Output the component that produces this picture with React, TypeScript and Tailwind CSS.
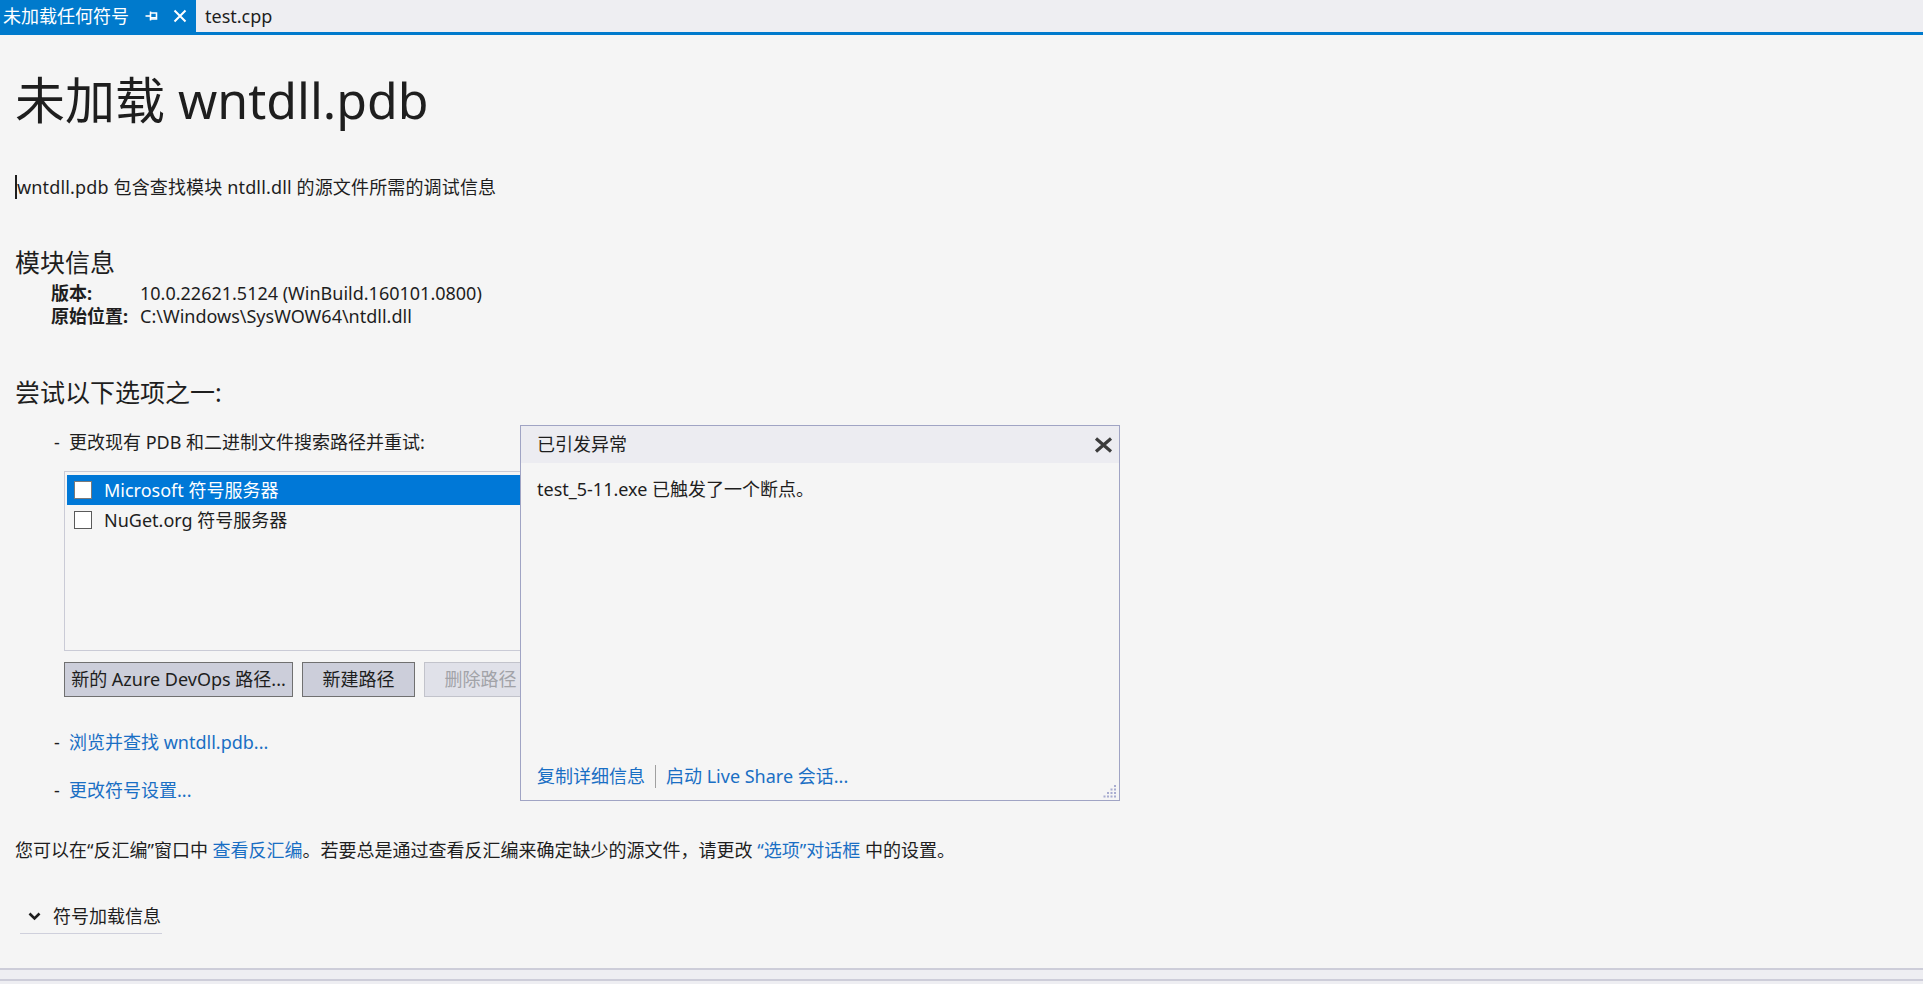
export default function App() {
  return (
    <div className="relative w-[1923px] h-[984px] overflow-hidden bg-[#f5f5f5] text-[#1e1e1e] flex flex-col font-['Noto_Sans','Noto_Sans_CJK_SC',sans-serif]">
      {/* Tab bar */}
      <div className="h-[35px] shrink-0 bg-[#eeeef2] border-b-[3px] border-[#007acc] flex">
        <div className="w-[196px] h-[32px] bg-[#007acc] text-white flex items-center pl-[3px] text-[18px] leading-none">
          <span>未加载任何符号</span>
          <svg className="ml-[16px]" width="13" height="12" viewBox="0 0 13 12" fill="none" stroke="white" strokeWidth="1.6">
            <path d="M0.5 6h5" />
            <path d="M5.5 1.5v9" />
            <path d="M5.5 3h6v6h-6" />
            <path d="M5.5 7.8h6" />
          </svg>
          <svg className="ml-[15px]" width="14" height="14" viewBox="0 0 14 14" fill="none" stroke="white" strokeWidth="2">
            <path d="M1.5 1.5l11 11M12.5 1.5l-11 11" />
          </svg>
        </div>
        <div className="pl-[9px] flex items-center text-[18px] leading-none text-[#1e1e1e]">test.cpp</div>
      </div>

      {/* Main content */}
      <div className="flex-1 px-[15px] flex flex-col">
        <h1 className="mt-[36px] text-[50px] leading-[58px] font-normal">未加载 wntdll.pdb</h1>

        <p className="mt-[45px] text-[18px] leading-[26px] flex items-center">
          <span className="inline-block w-[2px] h-[24px] bg-[#1e1e1e]" />
          <span className="tracking-[0.15px]">wntdll.pdb 包含查找模块 ntdll.dll 的源文件所需的调试信息</span>
        </p>

        <h2 className="mt-[46px] text-[25px] leading-[32px] font-normal">模块信息</h2>
        <div className="mt-[4px] ml-[36px] grid grid-cols-[89px_1fr] text-[18px] leading-[23px]">
          <span className="font-bold">版本:</span>
          <span>10.0.22621.5124 (WinBuild.160101.0800)</span>
          <span className="font-bold">原始位置:</span>
          <span>C:\Windows\SysWOW64\ntdll.dll</span>
        </div>

        <h2 className="mt-[48px] text-[25px] leading-[32px] font-normal">尝试以下选项之一:</h2>

        <div className="mt-[21px] ml-[39px] flex text-[18px] leading-[26px]">
          <span className="w-[15px]">-</span>
          <span>更改现有 PDB 和二进制文件搜索路径并重试:</span>
        </div>

        <div className="mt-[16px] ml-[49px] w-[474px] h-[180px] border border-[#cacbd6] bg-[#f5f5f5] pt-[3px] px-[2px]">
          <div className="h-[30px] bg-[#0078d7] text-white flex items-center pl-[7px] text-[18px]">
            <span className="w-[18px] h-[18px] bg-white border border-[#7a7a7a] shrink-0" />
            <span className="ml-[12px]">Microsoft 符号服务器</span>
          </div>
          <div className="h-[30px] flex items-center pl-[7px] text-[18px]">
            <span className="w-[18px] h-[18px] bg-white border border-[#5a5a5a] shrink-0" />
            <span className="ml-[12px]">NuGet.org 符号服务器</span>
          </div>
        </div>

        <div className="mt-[11px] ml-[49px] flex gap-[9px] text-[18px]">
          <button className="w-[229px] h-[35px] bg-[#ccceda] border border-[#707070] text-[#1e1e1e] flex items-center justify-center whitespace-nowrap">
            新的 Azure DevOps 路径...
          </button>
          <button className="w-[113px] h-[35px] bg-[#ccceda] border border-[#707070] text-[#1e1e1e] flex items-center justify-center">
            新建路径
          </button>
          <button className="w-[113px] h-[35px] bg-[#e0e1e9] border border-[#c2c3cb] text-[#a2a3a8] flex items-center justify-center">
            删除路径
          </button>
        </div>

        <div className="mt-[32px] ml-[39px] flex text-[18px] leading-[26px]">
          <span className="w-[15px]">-</span>
          <span className="text-[#1a6fc4]">浏览并查找 wntdll.pdb...</span>
        </div>
        <div className="mt-[22px] ml-[39px] flex text-[18px] leading-[26px]">
          <span className="w-[15px]">-</span>
          <span className="text-[#1a6fc4]">更改符号设置...</span>
        </div>

        <p className="mt-[34px] text-[18px] leading-[26px]">
          您可以在“反汇编”窗口中 <span className="text-[#1a6fc4]">查看反汇编</span>。若要总是通过查看反汇编来确定缺少的源文件，请更改{" "}
          <span className="text-[#1a6fc4]">“选项”对话框</span> 中的设置。
        </p>

        <div className="mt-[36px] ml-[5px] w-[142px] h-[35px] border-b border-[#cfd0dc] flex items-center pl-[8px] text-[18px]">
          <svg width="13" height="9" viewBox="0 0 13 9" fill="none" stroke="#1e1e1e" strokeWidth="2.6">
            <path d="M1.5 1.5l5 5 5-5" />
          </svg>
          <span className="ml-[12px]">符号加载信息</span>
        </div>
      </div>

      {/* Bottom strip */}
      <div className="h-[16px] shrink-0 bg-[#eeeef2] flex flex-col">
        <div className="h-[2px] bg-[#cdcdd9]" />
        <div className="h-[9px]" />
        <div className="h-[2px] bg-[#cdcdd9]" />
      </div>

      {/* Exception popup */}
      <div className="absolute left-[520px] top-[425px] w-[600px] h-[376px] border border-[#a0a4c4] bg-[#f5f5f5] flex flex-col">
        <div className="h-[37px] bg-[#ececf1] flex items-center justify-between pl-[16px] pr-[6px] text-[18px]">
          <span>已引发异常</span>
          <svg width="19" height="16" viewBox="0 0 19 16" fill="none" stroke="#3c3c3c" strokeWidth="3.2">
            <path d="M2 1.5l15 13M17 1.5l-15 13" />
          </svg>
        </div>
        <div className="flex-1 pt-[13px] pl-[16px] text-[18px] leading-[26px]">
          test_5-11.exe 已触发了一个断点。
        </div>
        <div className="relative h-[37px] pl-[16px] pb-[11px] flex items-center text-[18px] leading-[26px]">
          <span className="text-[#1a6fc4]">复制详细信息</span>
          <span className="mx-[10px] w-px h-[23px] bg-[#a0a0a0]" />
          <span className="text-[#1a6fc4]">启动 Live Share 会话...</span>
          <svg className="absolute right-[2px] bottom-[2px]" width="14" height="14" viewBox="0 0 14 14" fill="#a8acd0">
            <rect x="11" y="1" width="2" height="2" />
            <rect x="11" y="4.5" width="2" height="2" />
            <rect x="7.5" y="4.5" width="2" height="2" />
            <rect x="11" y="8" width="2" height="2" />
            <rect x="7.5" y="8" width="2" height="2" />
            <rect x="4" y="8" width="2" height="2" />
            <rect x="11" y="11.5" width="2" height="2" />
            <rect x="7.5" y="11.5" width="2" height="2" />
            <rect x="4" y="11.5" width="2" height="2" />
            <rect x="0.5" y="11.5" width="2" height="2" />
          </svg>
        </div>
      </div>
    </div>
  );
}
